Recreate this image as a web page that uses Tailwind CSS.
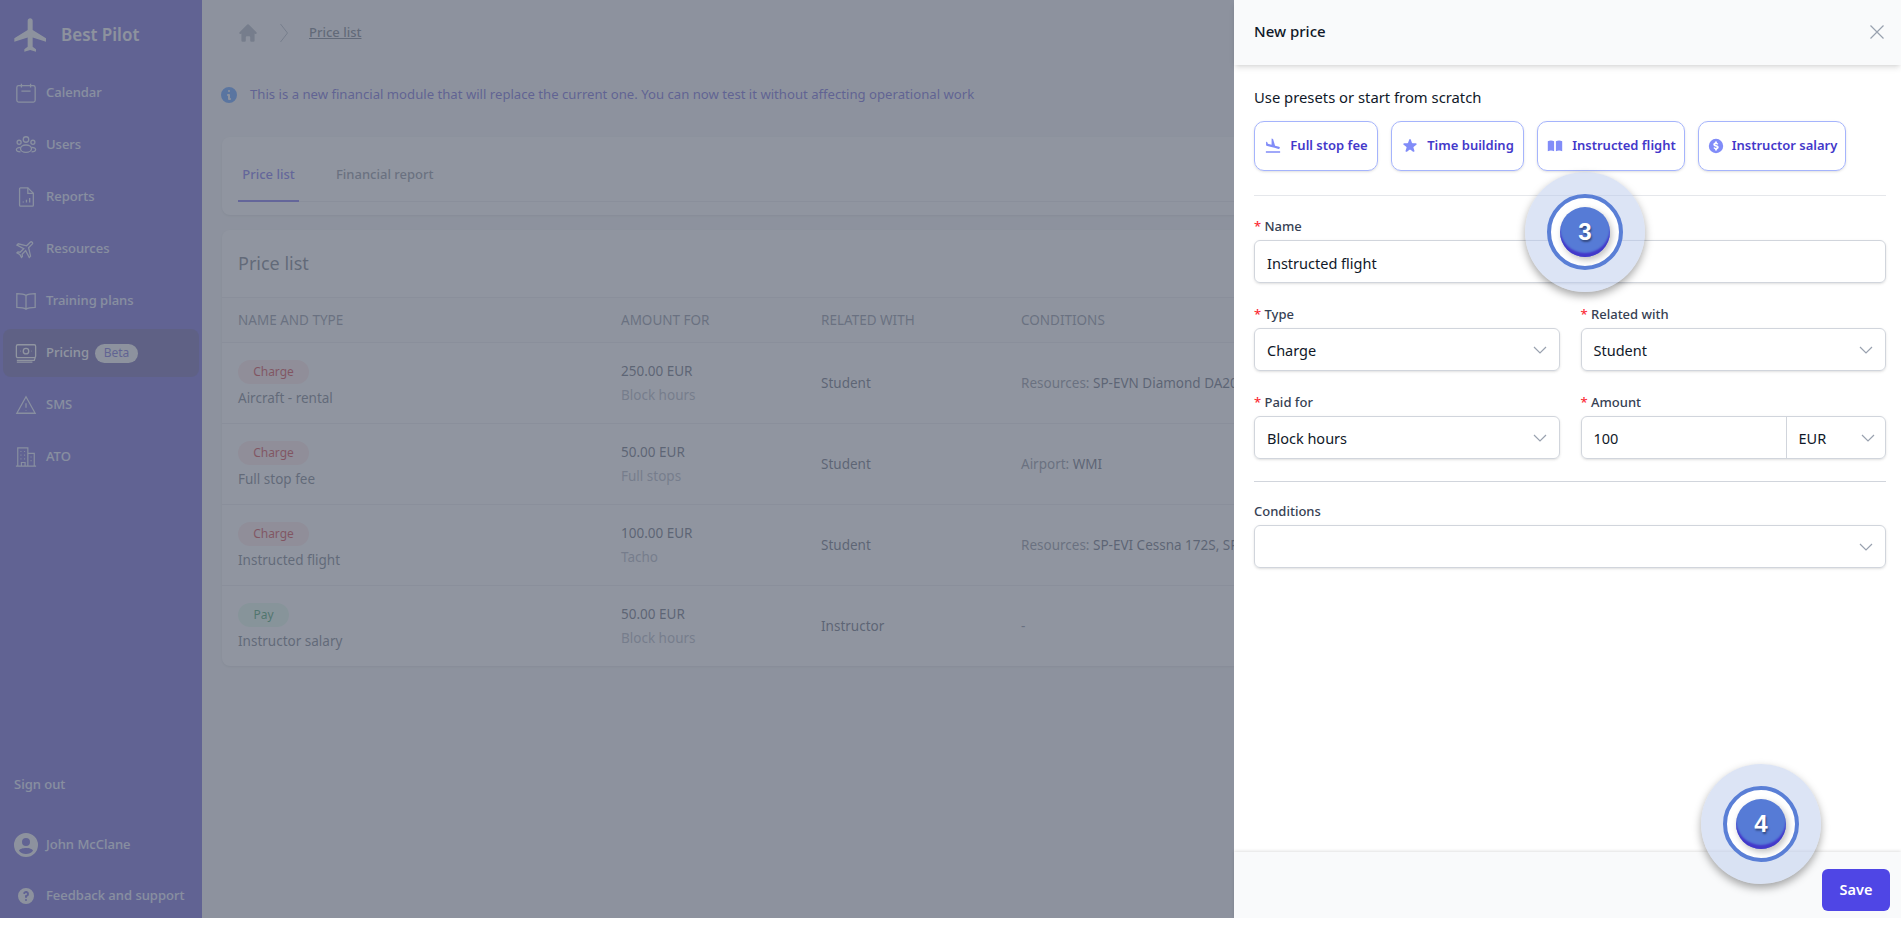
<!DOCTYPE html>
<html lang="en">
<head>
  <meta charset="UTF-8">
  <title>Best Pilot - New price</title>
  <script src="https://cdn.jsdelivr.net/npm/@tailwindcss/browser@4"></script>
</head>
<body class="bg-white font-['Noto_Sans',sans-serif]">
  <div class="relative h-[918px] overflow-hidden flex">

    <!-- sidebar -->
    <aside class="w-[202px] shrink-0 bg-[#4338ca] text-indigo-100 flex flex-col">
      <div class="flex items-center h-[67px] pl-[11px] gap-[10px] pt-[2px]">
        <svg class="w-[40px] h-[40px] text-gray-100" viewBox="0 0 24 24" fill="currentColor"><path d="M21 16v-2l-8-5V3.5c0-.83-.67-1.5-1.5-1.5S10 2.67 10 3.5V9l-8 5v2l8-2.5V19l-2 1.500V22l3.500-1 3.500 1v-1.500L13 19v-5.500l8 2.500z"/></svg>
        <span class="text-[17px] font-semibold text-gray-100">Best Pilot</span>
      </div>
      <nav class="text-[13px] font-medium">
        <a class="flex items-center h-[52px] pl-[15px] gap-[9px]">
          <svg class="w-[22px] h-[22px]" viewBox="0 0 24 24" fill="none" stroke="currentColor" stroke-width="1.4"><rect x="2" y="4" width="20" height="18" rx="2"/><path d="M7 2v4M17 2v4M7 10h10"/></svg>
          Calendar
        </a>
        <a class="flex items-center h-[52px] pl-[15px] gap-[9px]">
          <svg class="w-[22px] h-[22px]" viewBox="0 0 24 24" fill="none" stroke="currentColor" stroke-width="1.4"><circle cx="12" cy="6" r="3"/><circle cx="4.5" cy="9" r="2.2"/><circle cx="19.5" cy="9" r="2.2"/><ellipse cx="12" cy="16" rx="6" ry="4"/><path d="M6 14.5c-2.5 0-4.5 1.2-4.5 2.5s2 2.500 4.500 2.500M18 14.500c2.500 0 4.500 1.200 4.500 2.500s-2 2.500-4.500 2.500"/></svg>
          Users
        </a>
        <a class="flex items-center h-[52px] pl-[15px] gap-[9px]">
          <svg class="w-[22px] h-[22px]" viewBox="0 0 24 24" fill="none" stroke="currentColor" stroke-width="1.4"><path d="M5 3a1 1 0 0 1 1-1h8l6 6v13a1 1 0 0 1-1 1H6a1 1 0 0 1-1-1z"/><path d="M14 2v6h6M9 18v-1M12.500 18v-3M16 18v-5"/></svg>
          Reports
        </a>
        <a class="flex items-center h-[52px] pl-[15px] gap-[9px]">
          <svg class="w-[22px] h-[22px]" viewBox="0 0 24 24" fill="none" stroke="currentColor" stroke-width="1.4"><path transform="rotate(45 12 12)" d="M21 16v-2l-8-5V3.500c0-.83-.67-1.500-1.500-1.500S10 2.670 10 3.500V9l-8 5v2l8-2.500V19l-2 1.500V22l3.500-1 3.500 1v-1.500L13 19v-5.500l8 2.500z"/></svg>
          Resources
        </a>
        <a class="flex items-center h-[52px] pl-[15px] gap-[9px]">
          <svg class="w-[22px] h-[22px]" viewBox="0 0 24 24" fill="none" stroke="currentColor" stroke-width="1.4"><path d="M12 6c-2-1.500-5-2-10-2v15c5 0 8 .5 10 2 2-1.500 5-2 10-2V4c-5 0-8 .5-10 2zM12 6v15"/></svg>
          Training plans
        </a>
        <a class="flex items-center h-[48px] mx-[3px] my-[2px] pl-[12px] gap-[9px] rounded-lg bg-[#3c3294] text-white">
          <svg class="w-[22px] h-[22px]" viewBox="0 0 24 24" fill="none" stroke="currentColor" stroke-width="1.4"><rect x="1.500" y="3" width="21" height="14" rx="1.500"/><circle cx="12" cy="10" r="3"/><path d="M5.500 10h.5M18 10h.5M2 20h19l1-3M2 22h17"/></svg>
          Pricing
          <span class="-ml-[3px] w-[43px] h-[19px] flex items-center justify-center rounded-full bg-gray-100 text-[#4338ca] text-[12px] font-normal">Beta</span>
        </a>
        <a class="flex items-center h-[52px] pl-[15px] gap-[9px]">
          <svg class="w-[22px] h-[22px]" viewBox="0 0 24 24" fill="none" stroke="currentColor" stroke-width="1.4"><path d="M12 3 2 21h20zM12 10v5M12 17.500v.5"/></svg>
          SMS
        </a>
        <a class="flex items-center h-[52px] pl-[15px] gap-[9px]">
          <svg class="w-[22px] h-[22px]" viewBox="0 0 24 24" fill="none" stroke="currentColor" stroke-width="1.300"><path d="M1 22h22M3 22V2h11v20M14 8h7v14M6 6h1M10 6h1M6 10h1M10 10h1M6 14h1M10 14h1M7 22v-4h4v4M17 12h1M17 16h1"/></svg>
          ATO
        </a>
      </nav>
      <div class="mt-auto text-[13px] font-medium">
        <div class="pl-[14px] h-[18px] flex items-center mb-[39px]">Sign out</div>
        <div class="flex items-center pl-[14px] gap-[8px] h-[24px] mb-[29px]">
          <svg class="w-[24px] h-[24px] text-gray-100" viewBox="0 0 24 24" fill="currentColor"><path d="M12 0a12 12 0 1 0 0 24 12 12 0 0 0 0-24zm0 5a4 4 0 1 1 0 8 4 4 0 0 1 0-8zm0 16a9 9 0 0 1-7-3.300C5.500 15.800 9 15 12 15s6.500.8 7 2.700A9 9 0 0 1 12 21z"/></svg>
          John McClane
        </div>
        <div class="flex items-center pl-[16px] gap-[10px] h-[20px] mb-[12px]">
          <svg class="w-[20px] h-[20px] text-gray-100" viewBox="0 0 20 20" fill="currentColor"><path fill-rule="evenodd" d="M18 10a8 8 0 1 1-16 0 8 8 0 0 1 16 0zm-8-3a1 1 0 0 0-.867.5 1 1 0 1 1-1.731-1A3 3 0 0 1 13 8a3 3 0 0 1-2 2.830V11a1 1 0 1 1-2 0v-1a1 1 0 0 1 1-1 1 1 0 1 0 0-2zm0 8a1 1 0 1 0 0-2 1 1 0 0 0 0 2z" clip-rule="evenodd"/></svg>
          Feedback and support
        </div>
      </div>
    </aside>

    <!-- page under the drawer -->
    <main class="flex-1 min-w-0 bg-gray-100 pl-[20px] pr-[12px] text-gray-700">
      <div class="flex items-center h-[22px] mt-[22px] pl-[15px] gap-[20px]">
        <svg class="w-[22px] h-[22px] text-gray-400" viewBox="0 0 20 20" fill="currentColor"><path d="M10.700 2.300a1 1 0 0 0-1.400 0l-7 7a1 1 0 0 0 1.400 1.400l.3-.3V17a1 1 0 0 0 1 1h2a1 1 0 0 0 1-1v-3a1 1 0 0 1 1-1h2a1 1 0 0 1 1 1v3a1 1 0 0 0 1 1h2a1 1 0 0 0 1-1v-6.600l.3.3a1 1 0 0 0 1.400-1.400z"/></svg>
        <svg class="w-[10px] h-[20px] text-gray-400" viewBox="0 0 10 20" fill="none" stroke="currentColor"><path d="m1.500 1 7 9-7 9"/></svg>
        <a class="text-[13px] font-medium underline text-gray-600">Price list</a>
      </div>
      <div class="flex items-center h-[22px] mt-[40px] -ml-[3px] gap-[11px] text-[13.150px] text-[#4338ca]">
        <svg class="w-[20px] h-[20px] text-blue-500" viewBox="0 0 20 20" fill="currentColor"><path fill-rule="evenodd" d="M18 10a8 8 0 1 1-16 0 8 8 0 0 1 16 0zm-7-4a1 1 0 1 1-2 0 1 1 0 0 1 2 0zM9 9a1 1 0 0 0 0 2v3a1 1 0 0 0 1 1h1a1 1 0 1 0 0-2v-3a1 1 0 0 0-1-1z" clip-rule="evenodd"/></svg>
        This is a new financial module that will replace the current one. You can now test it without affecting operational work
      </div>

      <div class="mt-[31px] h-[78px] bg-white rounded-lg shadow-sm px-[16px]">
        <div class="h-[65px] border-b border-gray-200 flex gap-[37px] text-[13px] font-medium">
          <div class="w-[61px] h-[65px] border-b-2 border-[#4f46e5] text-[#4f46e5] pt-[28px] text-center">Price list</div>
          <div class="pt-[28px] text-gray-500">Financial report</div>
        </div>
      </div>

      <div class="mt-[15px] bg-white rounded-lg shadow-sm">
        <div class="h-[68px] flex items-center pl-[16px] text-[18px] text-gray-600 border-b border-gray-200">Price list</div>
        <div class="grid grid-cols-[383px_200px_200px_1fr] items-center h-[45px] pl-[16px] bg-gray-50 text-[13.500px] text-gray-500 border-b border-gray-200">
          <div>NAME AND TYPE</div><div>AMOUNT FOR</div><div>RELATED WITH</div><div>CONDITIONS</div>
        </div>

        <div class="grid grid-cols-[383px_200px_200px_1fr] items-center h-[81px] pl-[16px] text-[13.500px] border-b border-gray-200">
          <div>
            <span class="flex items-center justify-center w-[71px] h-[24px] rounded-xl bg-red-100 text-red-700 text-[12px]">Charge</span>
            <div class="mt-[5px] leading-[18px] text-gray-600">Aircraft - rental</div>
          </div>
          <div><div class="text-gray-700 leading-[24px]">250.00 EUR</div><div class="text-gray-400 leading-[24px]">Block hours</div></div>
          <div>Student</div>
          <div class="whitespace-nowrap"><span class="text-gray-500">Resources:</span> SP-EVN Diamond DA20, SP-EVK Diamond DA20</div>
        </div>
        <div class="grid grid-cols-[383px_200px_200px_1fr] items-center h-[81px] pl-[16px] text-[13.500px] border-b border-gray-200">
          <div>
            <span class="flex items-center justify-center w-[71px] h-[24px] rounded-xl bg-red-100 text-red-700 text-[12px]">Charge</span>
            <div class="mt-[5px] leading-[18px] text-gray-600">Full stop fee</div>
          </div>
          <div><div class="text-gray-700 leading-[24px]">50.00 EUR</div><div class="text-gray-400 leading-[24px]">Full stops</div></div>
          <div>Student</div>
          <div class="whitespace-nowrap"><span class="text-gray-500">Airport:</span> WMI</div>
        </div>
        <div class="grid grid-cols-[383px_200px_200px_1fr] items-center h-[81px] pl-[16px] text-[13.500px] border-b border-gray-200">
          <div>
            <span class="flex items-center justify-center w-[71px] h-[24px] rounded-xl bg-red-100 text-red-700 text-[12px]">Charge</span>
            <div class="mt-[5px] leading-[18px] text-gray-600">Instructed flight</div>
          </div>
          <div><div class="text-gray-700 leading-[24px]">100.00 EUR</div><div class="text-gray-400 leading-[24px]">Tacho</div></div>
          <div>Student</div>
          <div class="whitespace-nowrap"><span class="text-gray-500">Resources:</span> SP-EVI Cessna 172S, SP-EVN Diamond DA20</div>
        </div>
        <div class="grid grid-cols-[383px_200px_200px_1fr] items-center h-[80px] pl-[16px] text-[13.500px]">
          <div>
            <span class="flex items-center justify-center w-[51px] h-[24px] rounded-xl bg-green-100 text-green-700 text-[12px]">Pay</span>
            <div class="mt-[5px] leading-[18px] text-gray-600">Instructor salary</div>
          </div>
          <div><div class="text-gray-700 leading-[24px]">50.00 EUR</div><div class="text-gray-400 leading-[24px]">Block hours</div></div>
          <div>Instructor</div>
          <div class="text-gray-500">-</div>
        </div>
      </div>
    </main>

    <!-- dim layer -->
    <div class="absolute inset-0 bg-[#6b7280]/75"></div>

    <!-- drawer -->
    <section class="absolute top-0 right-0 bottom-0 w-[667px] bg-white flex flex-col text-gray-900">
      <header class="h-[65px] shrink-0 bg-gray-50 shadow-md flex items-center justify-between pl-[20px] pr-[17px] pb-[2px]">
        <h2 class="text-[15px] font-medium">New price</h2>
        <svg class="w-[14px] h-[14px] text-gray-400" viewBox="0 0 14 14" fill="none" stroke="currentColor" stroke-width="1.200"><path d="m.5.5 13 13M13.500.5l-13 13"/></svg>
      </header>

      <form class="flex-1 pl-[20px] pr-[15px]">
        <p class="mt-[22px] text-[14.800px] leading-[20px]">Use presets or start from scratch</p>
        <div class="flex gap-[13px] mt-[14px] text-[13px] font-semibold text-[#4338ca]">
          <button type="button" class="h-[50px] w-[124px] flex items-center justify-center gap-[8px] rounded-[10px] border border-[#a5b4fc] shadow-sm">
            <svg class="w-[18px] h-[18px] text-[#818cf8]" viewBox="0 0 24 24" fill="currentColor"><path d="M2.500 19h19v2h-19zm7.180-5.730 4.350 1.160 5.310 1.420c.8.210 1.620-.26 1.840-1.060.21-.8-.26-1.620-1.060-1.840l-5.310-1.420-2.760-9.020L10.120 2v8.280L5.150 8.950l-.93-2.320-1.450-.39v5.170l1.600.43z"/></svg>
            Full stop fee
          </button>
          <button type="button" class="h-[50px] w-[133px] flex items-center justify-center gap-[8px] rounded-[10px] border border-[#a5b4fc] shadow-sm">
            <svg class="w-[18px] h-[18px] text-[#818cf8]" viewBox="0 0 20 20" fill="currentColor"><path d="M9.050 2.930c.3-.92 1.600-.92 1.900 0l1.070 3.290a1 1 0 0 0 .95.69h3.460c.97 0 1.370 1.240.59 1.810l-2.800 2.030a1 1 0 0 0-.36 1.120l1.070 3.290c.3.92-.76 1.690-1.540 1.120l-2.800-2.030a1 1 0 0 0-1.180 0l-2.800 2.030c-.78.57-1.840-.2-1.540-1.120l1.070-3.290a1 1 0 0 0-.36-1.120L2.980 8.720c-.78-.57-.38-1.810.59-1.810h3.460a1 1 0 0 0 .95-.69z"/></svg>
            Time building
          </button>
          <button type="button" class="h-[50px] w-[148px] flex items-center justify-center gap-[8px] rounded-[10px] border border-[#a5b4fc] shadow-sm">
            <svg class="w-[18px] h-[18px] text-[#818cf8]" viewBox="0 0 20 20" fill="currentColor"><path d="M9 4.800A8 8 0 0 0 5.500 4c-1.200 0-2.400.3-3.500.8v11a8 8 0 0 1 3.500-.8c1.300 0 2.500.3 3.500.8zM11 15.800a8 8 0 0 1 3.500-.8c1.300 0 2.500.3 3.500.8v-11A8 8 0 0 0 14.500 4c-1.300 0-2.500.3-3.500.8z"/></svg>
            Instructed flight
          </button>
          <button type="button" class="h-[50px] w-[148px] flex items-center justify-center gap-[7px] rounded-[10px] border border-[#a5b4fc] shadow-sm">
            <svg class="w-[18px] h-[18px] text-[#818cf8]" viewBox="0 0 20 20" fill="currentColor"><path fill-rule="evenodd" d="M10 18a8 8 0 1 0 0-16 8 8 0 0 0 0 16zm1-13H9v1.100C7.800 6.400 7 7.200 7 8.300c0 1.400 1.100 1.900 2.300 2.200 1 .3 1.400.4 1.400.9 0 .4-.3.7-.9.700-.6 0-1-.3-1.200-.8l-1.500.6c.3.900 1 1.500 1.900 1.800V15h2v-1.200c1.200-.3 2-1.100 2-2.300 0-1.400-1.100-2-2.300-2.300-1-.3-1.400-.4-1.400-.8 0-.4.3-.6.800-.6s.8.200 1 .7l1.500-.6c-.3-.800-.9-1.300-1.600-1.600z" clip-rule="evenodd"/></svg>
            Instructor salary
          </button>
        </div>
        <hr class="mt-[24px] border-gray-200">

        <label class="block mt-[20px] text-[13px] font-medium text-gray-700 leading-[20px]"><span class="text-red-500">*</span> Name</label>
        <input type="text" value="Instructed flight" class="block mt-[4px] w-full h-[43px] px-[12px] pt-[2px] text-[14.500px] rounded-md border border-gray-300 shadow-sm">

        <div class="grid grid-cols-2 gap-x-[21px] mt-[21px]">
          <div>
            <label class="block text-[13px] font-medium text-gray-700 leading-[20px]"><span class="text-red-500">*</span> Type</label>
            <div class="mt-[4px] h-[43px] px-[12px] flex items-center justify-between text-[14.500px] rounded-md border border-gray-300 shadow-sm">
              <span class="pt-[2px]">Charge</span>
              <svg class="w-[14px] h-[8px] text-gray-400" viewBox="0 0 14 8" fill="none" stroke="currentColor" stroke-width="1.200"><path d="m1 1 6 6 6-6"/></svg>
            </div>
          </div>
          <div>
            <label class="block text-[13px] font-medium text-gray-700 leading-[20px]"><span class="text-red-500">*</span> Related with</label>
            <div class="mt-[4px] h-[43px] px-[12px] flex items-center justify-between text-[14.500px] rounded-md border border-gray-300 shadow-sm">
              <span class="pt-[2px]">Student</span>
              <svg class="w-[14px] h-[8px] text-gray-400" viewBox="0 0 14 8" fill="none" stroke="currentColor" stroke-width="1.200"><path d="m1 1 6 6 6-6"/></svg>
            </div>
          </div>
          <div class="mt-[21px]">
            <label class="block text-[13px] font-medium text-gray-700 leading-[20px]"><span class="text-red-500">*</span> Paid for</label>
            <div class="mt-[4px] h-[43px] px-[12px] flex items-center justify-between text-[14.500px] rounded-md border border-gray-300 shadow-sm">
              <span class="pt-[2px]">Block hours</span>
              <svg class="w-[14px] h-[8px] text-gray-400" viewBox="0 0 14 8" fill="none" stroke="currentColor" stroke-width="1.200"><path d="m1 1 6 6 6-6"/></svg>
            </div>
          </div>
          <div class="mt-[21px]">
            <label class="block text-[13px] font-medium text-gray-700 leading-[20px]"><span class="text-red-500">*</span> Amount</label>
            <div class="mt-[4px] h-[43px] flex text-[14.500px] rounded-md border border-gray-300 shadow-sm">
              <input type="text" value="100" class="w-[205px] px-[12px] pt-[3px] border-r border-gray-300 rounded-l-md">
              <div class="flex-1 pl-[12px] pr-[10px] flex items-center justify-between">
                <span class="pt-[2px]">EUR</span>
                <svg class="w-[14px] h-[8px] text-gray-400" viewBox="0 0 14 8" fill="none" stroke="currentColor" stroke-width="1.200"><path d="m1 1 6 6 6-6"/></svg>
              </div>
            </div>
          </div>
        </div>
        <hr class="mt-[22px] border-gray-300">

        <label class="block mt-[19px] text-[13px] font-medium text-gray-700 leading-[20px]">Conditions</label>
        <div class="mt-[4px] h-[43px] px-[12px] flex items-center justify-end rounded-md border border-gray-300 shadow-sm">
          <svg class="w-[14px] h-[8px] text-gray-400" viewBox="0 0 14 8" fill="none" stroke="currentColor" stroke-width="1.200"><path d="m1 1 6 6 6-6"/></svg>
        </div>
      </form>

      <footer class="h-[66px] shrink-0 bg-gray-50 shadow-[0_-1px_3px_rgba(0,0,0,0.12)] flex items-start justify-end pt-[17px] pr-[11px]">
        <button type="button" class="w-[68px] h-[42px] rounded-md bg-[#4f46e5] text-white text-[14.500px] font-semibold">Save</button>
      </footer>
    </section>

    <!-- tutorial markers -->
    <div class="absolute top-[172px] left-[1525px] w-[120px] h-[120px] rounded-full bg-[#b9c9ec]/50 shadow-[0_4px_8px_rgba(0,0,0,0.35)] flex items-center justify-center">
      <div class="w-[76px] h-[76px] rounded-full bg-white border-4 border-[#5a7fd6] flex items-center justify-center">
        <div class="w-[50px] h-[50px] rounded-full bg-[#567bd6] shadow-[inset_0_-4px_2px_#4338ca,2px_3px_6px_rgba(0,0,0,0.25)] flex items-center justify-center text-white text-[24px] font-bold font-['Liberation_Sans',sans-serif] [text-shadow:1px_2px_2px_rgba(0,0,0,0.4)]">3</div>
      </div>
    </div>
    <div class="absolute top-[764px] left-[1701px] w-[120px] h-[120px] rounded-full bg-[#b9c9ec]/50 shadow-[0_4px_8px_rgba(0,0,0,0.35)] flex items-center justify-center">
      <div class="w-[76px] h-[76px] rounded-full bg-white border-4 border-[#5a7fd6] flex items-center justify-center">
        <div class="w-[50px] h-[50px] rounded-full bg-[#567bd6] shadow-[inset_0_-4px_2px_#4338ca,2px_3px_6px_rgba(0,0,0,0.25)] flex items-center justify-center text-white text-[24px] font-bold font-['Liberation_Sans',sans-serif] [text-shadow:1px_2px_2px_rgba(0,0,0,0.4)]">4</div>
      </div>
    </div>
  </div>
</body>
</html>
